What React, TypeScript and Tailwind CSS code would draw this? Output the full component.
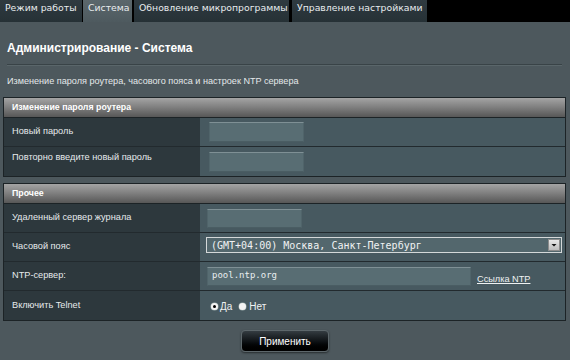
import React from "react";

const sans = { fontFamily: '"Liberation Sans", Arial, sans-serif' };

function Tab({ label, width, active }: { label: string; width: string; active?: boolean }) {
  return (
    <div
      className={`${width} h-[22px] pl-[5px] pt-[2px] text-[9.3px] leading-[12px] text-[#e8ecee] ${
        active ? "bg-gradient-to-b from-[#5b676c] to-[#4e5a5f]" : "bg-gradient-to-b from-[#2f3a40] to-[#263136]"
      }`}
      style={{ fontFamily: '"DejaVu Sans", Verdana, sans-serif' }}
    >
      {label}
    </div>
  );
}

function Header({ title }: { title: string }) {
  return (
    <div className="h-[20px] flex items-center pl-[8px] bg-gradient-to-b from-[#a4a4a4] via-[#7e7e7e] to-[#575757] border-b border-[#1c2326] text-white font-bold text-[8.8px]">
      {title}
    </div>
  );
}

function Row({
  label,
  children,
  last,
  labelTop,
  padL = "pl-[9px]",
}: {
  label: string;
  children?: React.ReactNode;
  last?: boolean;
  labelTop?: boolean;
  padL?: string;
}) {
  return (
    <div className={`flex h-[29px] ${last ? "" : "border-b border-[#222a2e]"}`}>
      <div
        className={`w-[196px] bg-[#2d383d] pl-[8px] text-[9.2px] text-[#e6eaec] flex ${
          labelTop ? "items-start pt-[4px]" : "items-center"
        }`}
      >
        {label}
      </div>
      <div className={`flex-1 bg-[#475960] flex items-center ${padL}`}>{children}</div>
    </div>
  );
}

function TextInput({ w, h = "h-[20px]", value }: { w: string; h?: string; value?: string }) {
  return (
    <div
      className={`${w} ${h} bg-[#586d73] border-t border-t-[#7f9095] border-x border-x-[#50646a] border-b border-b-[#4a5d63] flex items-center pl-[4px] text-[9px] text-[#e9eef0]`}
      style={{ fontFamily: '"DejaVu Sans Mono", monospace' }}
    >
      {value}
    </div>
  );
}

function Radio({ checked }: { checked?: boolean }) {
  return (
    <span className="w-[7px] h-[7px] rounded-full bg-[#f4f4f4] flex items-center justify-center shadow-[0_0_0_0.5px_#9aa]">
      {checked && <span className="w-[3px] h-[3px] rounded-full bg-black" />}
    </span>
  );
}

export default function App() {
  return (
    <div className="w-[570px] h-[360px] bg-black overflow-hidden" style={sans}>
      <div className="flex h-[22px]">
        <Tab label="Режим работы" width="w-[82px]" />
        <div className="w-[1px]" />
        <Tab label="Система" width="w-[49px]" active />
        <div className="w-[2px]" />
        <Tab label="Обновление микропрограммы" width="w-[155px]" />
        <div className="w-[3px]" />
        <Tab label="Управление настройками" width="w-[135px]" />
      </div>
      <div className="h-[338px] bg-[#4d585d] flex flex-col">
        <div className="mt-[19px] pl-[7px] h-[15px] leading-[15px] text-[12px] font-bold text-white">
          Администрирование - Система
        </div>
        <div className="mt-[8px] ml-[7px] w-[555px] h-[2px] border-t border-[#394347] border-b border-b-[#5a666a]" />
        <div className="mt-[9px] pl-[7px] h-[12px] leading-[12px] text-[9.1px] text-[#e4e8ea]">
          Изменение пароля роутера, часового пояса и настроек NTP сервера
        </div>
        <div className="mt-[10px] ml-[3px] w-[563px] border border-[#1c2326] flex flex-col">
          <Header title="Изменение пароля роутера" />
          <Row label="Новый пароль">
            <TextInput w="w-[95px]" />
          </Row>
          <Row label="Повторно введите новый пароль" labelTop last>
            <TextInput w="w-[95px]" />
          </Row>
        </div>
        <div className="mt-[6px] ml-[3px] w-[563px] border border-[#1c2326] flex flex-col">
          <Header title="Прочее" />
          <Row label="Удаленный сервер журнала" padL="pl-[7px]">
            <TextInput w="w-[95px]" h="h-[19px]" />
          </Row>
          <Row label="Часовой пояс" padL="pl-[6px]">
            <div
              className="w-[356px] h-[16px] mb-[4px] bg-[#53676d] border border-[#d4d8d9] flex items-center justify-between pl-[4px] pr-[1px] text-[10px] text-[#f0f2f3]"
              style={{ fontFamily: '"DejaVu Sans Mono", monospace' }}
            >
              <span>(GMT+04:00) Москва, Санкт-Петербург</span>
              <span className="w-[12px] h-[12px] bg-gradient-to-b from-[#e8e8e8] to-[#bdbdbd] border border-[#8c8c8c] flex items-center justify-center">
                <svg width="6" height="4" viewBox="0 0 6 4">
                  <path d="M0.5 1 L5.5 1 L3 3.5 Z" fill="#111" />
                </svg>
              </span>
            </div>
          </Row>
          <Row label="NTP-сервер:" padL="pl-[7px]">
            <TextInput w="w-[264px]" h="h-[19px]" value="pool.ntp.org" />
            <span className="ml-[6px] mt-[8px] text-[9.2px] text-[#eef1f2] underline">Ссылка NTP</span>
          </Row>
          <Row label="Включить Telnet" last padL="pl-[11px]">
            <div className="flex items-center text-[10px] text-[#eef1f2] mt-[2px]">
              <Radio checked />
              <span className="ml-[2px]">Да</span>
              <span className="ml-[7px]"><Radio /></span>
              <span className="ml-[3px]">Нет</span>
            </div>
          </Row>
        </div>
        <div className="mt-[9px] flex justify-center">
          <div className="w-[88px] h-[22px] rounded-[4px] border border-[#5d676b] bg-gradient-to-b from-[#343c41] via-[#101417] to-[#000] flex items-center justify-center text-[10px] text-white shadow-[0_1px_2px_rgba(0,0,0,0.5)]">
            Применить
          </div>
        </div>
      </div>
    </div>
  );
}
